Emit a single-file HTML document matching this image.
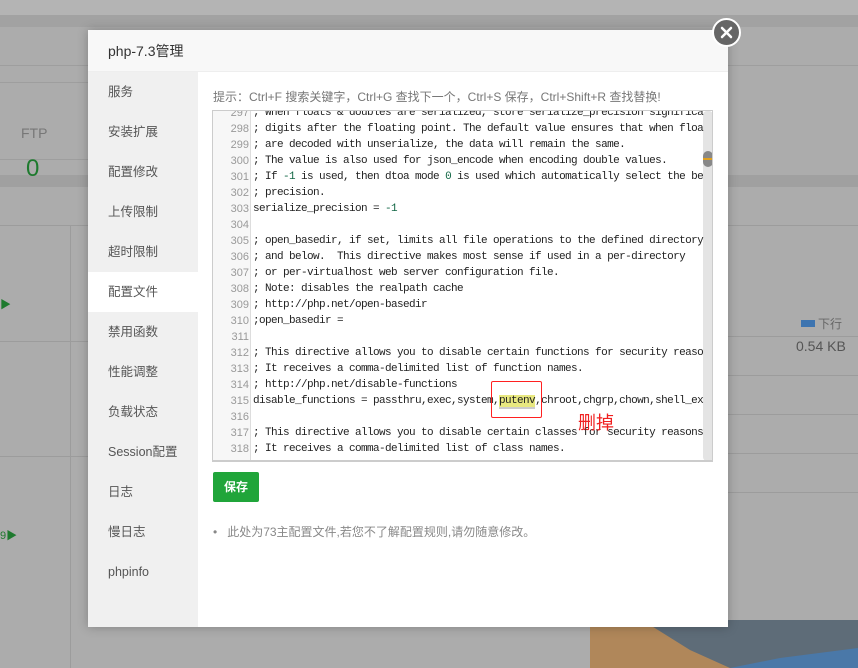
<!DOCTYPE html>
<html><head><meta charset="utf-8"><style>
*{margin:0;padding:0;box-sizing:border-box}
body{width:858px;height:668px;overflow:hidden;background:#acacac;font-family:"Liberation Sans","Noto Sans CJK SC",sans-serif;position:relative}
.abs{position:absolute}
.modal{left:88px;top:30px;width:640px;height:597px;background:#fff;box-shadow:0 0 10px rgba(0,0,0,.25)}
.hdr{left:0;top:0;width:640px;height:42px;background:#f8f8f8;border-bottom:1px solid #eee;font-size:14px;color:#333;line-height:42px;padding-left:20px}
.side{left:0;top:42px;width:110px;height:555px;background:#f0f0f0}
.side div{height:40px;line-height:40px;padding-left:20px;font-size:12.5px;color:#555}
.side div.on{background:#fff}
.tip{left:125px;top:58px;font-size:12px;color:#777}
.ed{left:124px;top:80px;width:501px;height:352px;border:1px solid #ccc;overflow:hidden;background:#fff}
.gut{left:0;top:0;width:38px;height:350px;background:#f7f7f7;border-right:1px solid #ddd}
.ln{position:absolute;left:0;width:36px;text-align:right;font-size:11px;color:#999;font-family:"Liberation Sans",sans-serif}
.cd{position:absolute;left:40px;white-space:pre;font-family:"Liberation Mono",monospace;font-size:11px;letter-spacing:-0.6px;color:#222}
.g{color:#164}
.btn{left:125px;top:442px;width:46px;height:30px;background:#20a53a;border-radius:2px;color:#fff;font-size:12px;font-weight:bold;line-height:30px;text-align:center}
.note{left:125px;top:493px;font-size:12px;color:#888}
.redbox{position:absolute;left:491px;top:381px;width:51px;height:37px;border:1.5px solid #ff2020;border-radius:2px;z-index:5}
</style></head><body>
<div class="abs" style="left:0;top:0;width:858px;height:15px;background:#b4b4b4"></div>
<div class="abs" style="left:0;top:15px;width:858px;height:12px;background:#a2a2a2"></div>
<div class="abs" style="left:0;top:65px;width:858px;height:1px;background:#9e9e9e"></div>
<div class="abs" style="left:0;top:82px;width:88px;height:1px;background:#9e9e9e"></div>
<div class="abs" style="left:0;top:159px;width:88px;height:1px;background:#9e9e9e"></div>
<div class="abs" style="left:0;top:175px;width:858px;height:12px;background:#a0a0a0"></div>
<div class="abs" style="left:0;top:225px;width:858px;height:1px;background:#9c9c9c"></div>
<div class="abs" style="left:0;top:341px;width:88px;height:1px;background:#9c9c9c"></div>
<div class="abs" style="left:0;top:456px;width:88px;height:1px;background:#9c9c9c"></div>
<div class="abs" style="left:70px;top:225px;width:1px;height:443px;background:#9c9c9c"></div>
<div class="abs" style="left:728px;top:336px;width:130px;height:1px;background:#9c9c9c"></div>
<div class="abs" style="left:728px;top:375px;width:130px;height:1px;background:#9c9c9c"></div>
<div class="abs" style="left:728px;top:414px;width:130px;height:1px;background:#9c9c9c"></div>
<div class="abs" style="left:728px;top:453px;width:130px;height:1px;background:#9c9c9c"></div>
<div class="abs" style="left:728px;top:492px;width:130px;height:1px;background:#9c9c9c"></div>
<div class="abs" style="left:21px;top:125px;font-size:14px;color:#777">FTP</div>
<div class="abs" style="left:26px;top:155px;font-size:24px;color:#1e7a2e">0</div>
<div class="abs" style="left:0;top:296px;font-size:11px;color:#1e7a2e">▶</div>
<div class="abs" style="left:0;top:527px;font-size:11px;color:#1e7a2e">9▶</div>
<div class="abs" style="left:801px;top:320px;width:14px;height:7px;background:#3d74b0"></div>
<div class="abs" style="left:818px;top:315px;font-size:12px;color:#666">下行</div>
<div class="abs" style="left:796px;top:338px;font-size:14px;color:#555">0.54 KB</div>
<svg class="abs" style="left:500px;top:620px" width="358" height="48"><rect x="90" y="0" width="268" height="48" fill="#5e6c78"/><path d="M90 7 L150 5 L190 30 L230 48 L90 48Z" fill="#b0875a"/><path d="M230 48 L280 38 L358 28 L358 48Z" fill="#4a78a8"/></svg>
<div class="abs modal">
<div class="abs hdr">php-7.3管理</div>
<div class="abs side">
<div>服务</div><div>安装扩展</div><div>配置修改</div><div>上传限制</div><div>超时限制</div><div class="on">配置文件</div><div>禁用函数</div><div>性能调整</div><div>负载状态</div><div>Session配置</div><div>日志</div><div>慢日志</div><div>phpinfo</div>
</div>
<div class="abs tip">提示：Ctrl+F 搜索关键字，Ctrl+G 查找下一个，Ctrl+S 保存，Ctrl+Shift+R 查找替换!</div>
<div class="abs ed">
<div class="abs gut"></div>
<div class="abs" style="left:490px;top:0;width:10px;height:350px;background:#e4e4e4;border-radius:4px"></div>
<div class="abs" style="left:490px;top:40px;width:10px;height:16px;background:#888;border-radius:5px"></div>
<div class="abs" style="left:490px;top:47px;width:10px;height:2px;background:#e0a020"></div>
<div class="abs" style="left:0;top:349px;width:500px;height:1px;background:#ccc"></div>
<div id="c"></div>
</div>
<div class="abs btn">保存</div>
<div class="abs note">•&nbsp;&nbsp;&nbsp;此处为73主配置文件,若您不了解配置规则,请勿随意修改。</div>
<div class="abs" style="left:490px;top:379px;font-size:18px;color:#f02020">删掉</div>
</div>
<div class="redbox"></div>
<div class="abs" style="left:712px;top:18px;width:29px;height:29px;border-radius:50%;background:#666;border:2px solid #fff"><svg width="25" height="25" style="position:absolute;left:0;top:0"><path d="M8 8L17 17M17 8L8 17" stroke="#fff" stroke-width="2.5" stroke-linecap="round"/></svg></div>
<script>
var L=[
"; When floats & doubles are serialized, store serialize_precision significa",
"; digits after the floating point. The default value ensures that when floa",
"; are decoded with unserialize, the data will remain the same.",
"; The value is also used for json_encode when encoding double values.",
"; If <span class=g>-1</span> is used, then dtoa mode <span class=g>0</span> is used which automatically select the be",
"; precision.",
"serialize_precision = <span class=g>-1</span>",
"",
"; open_basedir, if set, limits all file operations to the defined directory",
"; and below.  This directive makes most sense if used in a per-directory",
"; or per-virtualhost web server configuration file.",
"; Note: disables the realpath cache",
"; http://php.net/open-basedir",
";open_basedir =",
"",
"; This directive allows you to disable certain functions for security reaso",
"; It receives a comma-delimited list of function names.",
"; http://php.net/disable-functions",
"disable_functions = passthru,exec,system,<span style=\"background:#e8e880;border-bottom:2px solid #ccc\">putenv</span>,chroot,chgrp,chown,shell_ex",
"",
"; This directive allows you to disable certain classes for security reasons",
"; It receives a comma-delimited list of class names."];
var h="";for(var i=0;i<L.length;i++){var t=-4+i*16;h+='<div class="ln" style="top:'+t+'px">'+(297+i)+'</div><div class="cd" style="top:'+t+'px">'+L[i]+'</div>';}
document.getElementById("c").innerHTML=h;
</script>
</body></html>
